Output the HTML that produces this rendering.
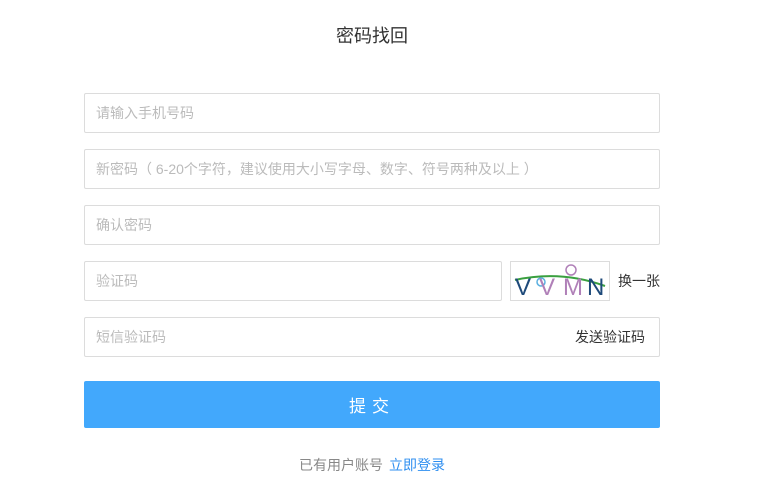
<!DOCTYPE html>
<html><head><meta charset="utf-8"><style>
*{margin:0;padding:0;box-sizing:border-box}
body{width:778px;height:503px;background:#fff;font-family:"Liberation Sans","Noto Sans CJK SC",sans-serif;position:relative;overflow:hidden}
.t{position:absolute;top:22px;left:0;width:744px;text-align:center;font-size:18px;color:#333}
.in{position:absolute;left:84px;width:576px;height:40px;border:1px solid #dcdcdc;border-radius:2px;font-size:14px;color:#bbb;line-height:39px;padding-left:11px}
.cap{position:absolute;left:510px;top:261px;width:100px;height:40px;border:1px solid #dcdcdc}
.chg{position:absolute;left:618px;top:271px;font-size:14px;color:#333}
.send{position:absolute;right:14px;top:0;color:#333}
.btn{position:absolute;left:84px;top:381px;width:576px;height:47px;background:#42a8fc;border-radius:2px;color:#fff;font-size:17px;text-align:center;line-height:52px;letter-spacing:6px}
.ft{position:absolute;top:455px;left:0;width:744px;text-align:center;font-size:14px;color:#888}
.ft a{color:#2f8ff0;margin-left:6px;text-decoration:none}
</style></head><body>
<div class="t">密码找回</div>
<div class="in" style="top:93px">请输入手机号码</div>
<div class="in" style="top:149px">新密码（ 6-20个字符，建议使用大小写字母、数字、符号两种及以上 ）</div>
<div class="in" style="top:205px">确认密码</div>
<div class="in" style="top:261px;width:418px">验证码</div>
<div class="cap"><svg width="98" height="38" viewBox="0 0 98 38">
<path d="M4 18 Q50 8 94 24" stroke="#3aa040" stroke-width="2" fill="none"/>
<circle cx="30" cy="20" r="4" stroke="#5ab0e0" fill="none" stroke-width="1.5"/>
<circle cx="60" cy="8" r="5" stroke="#b080b8" fill="none" stroke-width="1.5"/>
<text x="4" y="33" font-size="24" fill="#1e4a7a" font-family="Liberation Sans">V</text>
<text x="28" y="33" font-size="24" fill="#b080b8" font-family="Liberation Sans">V</text>
<text x="52" y="33" font-size="24" fill="#b080b8" font-family="Liberation Sans">M</text>
<text x="76" y="33" font-size="24" fill="#1e4a7a" font-family="Liberation Sans">N</text>
</svg></div>
<div class="chg">换一张</div>
<div class="in" style="top:317px">短信验证码<span class="send">发送验证码</span></div>
<div class="btn">提交</div>
<div class="ft">已有用户账号<a>立即登录</a></div>
</body></html>
